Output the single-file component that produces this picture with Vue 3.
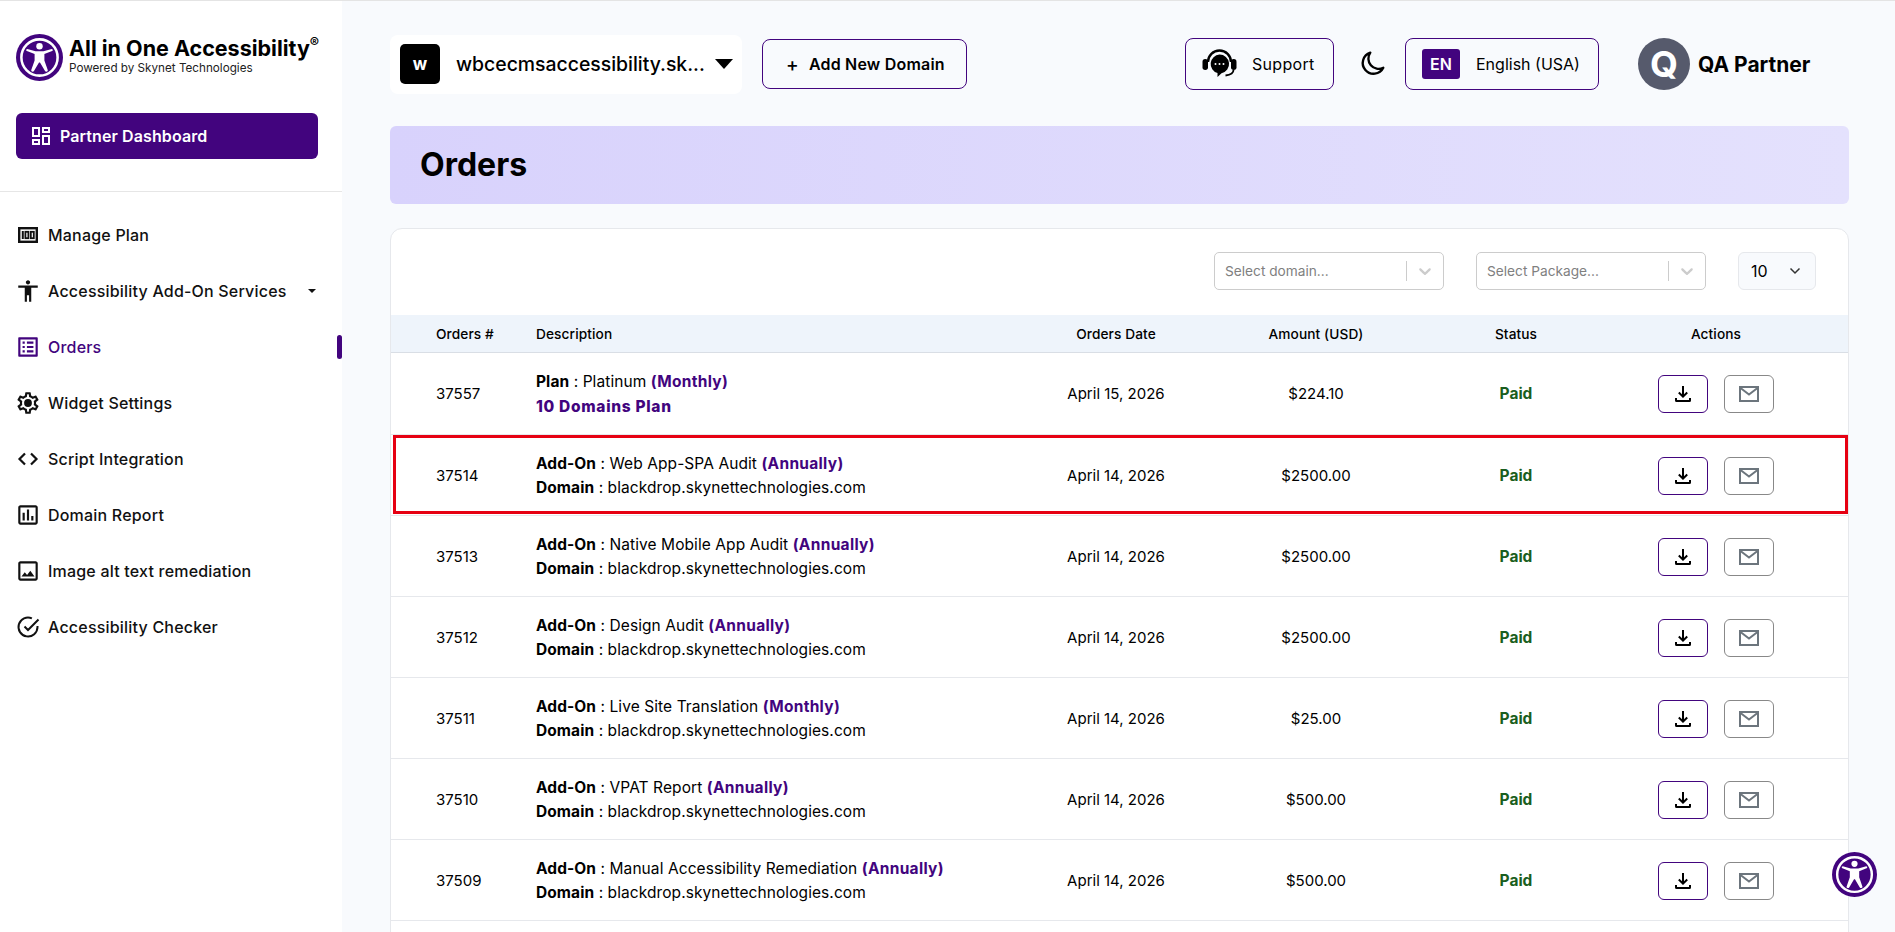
<script setup>
const navItems = [
  { label: 'Manage Plan', icon: 'plan' },
  { label: 'Accessibility Add-On Services', icon: 'person', caret: true },
  { label: 'Orders', icon: 'list', active: true },
  { label: 'Widget Settings', icon: 'gear' },
  { label: 'Script Integration', icon: 'code' },
  { label: 'Domain Report', icon: 'report' },
  { label: 'Image alt text remediation', icon: 'image' },
  { label: 'Accessibility Checker', icon: 'check' }
]

const orders = [
  { id: '37557', kind: 'Plan', name: 'Platinum', period: 'Monthly', extra: '10 Domains Plan', date: 'April 15, 2026', amount: '$224.10' },
  { id: '37514', kind: 'Add-On', name: 'Web App-SPA Audit', period: 'Annually', date: 'April 14, 2026', amount: '$2500.00', marked: true },
  { id: '37513', kind: 'Add-On', name: 'Native Mobile App Audit', period: 'Annually', date: 'April 14, 2026', amount: '$2500.00' },
  { id: '37512', kind: 'Add-On', name: 'Design Audit', period: 'Annually', date: 'April 14, 2026', amount: '$2500.00' },
  { id: '37511', kind: 'Add-On', name: 'Live Site Translation', period: 'Monthly', date: 'April 14, 2026', amount: '$25.00' },
  { id: '37510', kind: 'Add-On', name: 'VPAT Report', period: 'Annually', date: 'April 14, 2026', amount: '$500.00' },
  { id: '37509', kind: 'Add-On', name: 'Manual Accessibility Remediation', period: 'Annually', date: 'April 14, 2026', amount: '$500.00' }
]
</script>

<template>
  <div class="page">
    <aside class="sidebar">
      <div class="brand">
        <svg class="brand-mark" viewBox="0 0 48 48">
          <circle cx="24" cy="24" r="24" fill="#42047e" />
          <circle cx="24" cy="24" r="18.5" fill="none" stroke="#fff" stroke-width="2.6" />
          <circle cx="24" cy="12.6" r="3.3" fill="#fff" />
          <path fill="#fff" d="M10.5 17Q10 15.5 11.5 15.2L20 17.5H28L36.5 15.2Q38 15.5 37.5 17L29 20.5V27L32.5 37Q32.5 38.5 31 38.5Q30 38.5 29.5 37.5L24.5 29H23.5L18.5 37.5Q18 38.5 17 38.5Q15.5 38.5 15.5 37L19 27V20.5Z" />
        </svg>
        <div class="brand-text">
          <div class="brand-name">All in One Accessibility<sup>®</sup></div>
          <div class="brand-sub">Powered by Skynet Technologies</div>
        </div>
      </div>
      <button class="dash-btn">
        <svg viewBox="0 0 24 24" width="24" height="24" fill="#fff"><path d="M19 5v2h-4V5h4M9 5v6H5V5h4m10 8v6h-4v-6h4M9 17v2H5v-2h4M21 3h-8v6h8V3zM11 3H3v10h8V3zm10 8h-8v10h8V11zm-10 4H3v6h8v-6z" /></svg>
        Partner Dashboard
      </button>
      <nav class="nav">
        <a v-for="item in navItems" :key="item.label" class="nav-item" :class="{ active: item.active }">
          <svg v-if="item.icon === 'plan'" class="nav-icon" viewBox="-3 -3 26 26" fill="none" stroke="currentColor">
            <rect x="1.2" y="3.2" width="17.6" height="13.6" stroke-width="2.4" />
            <path d="M4.8 6v8" stroke-width="2" />
            <rect x="7.4" y="6.8" width="3" height="6.4" stroke-width="1.8" />
            <rect x="12.8" y="6.8" width="3" height="6.4" stroke-width="1.8" />
          </svg>
          <svg v-else-if="item.icon === 'person'" class="nav-icon" viewBox="0 0 24 24" fill="currentColor"><path d="M12 2c1.1 0 2 .9 2 2s-.9 2-2 2-2-.9-2-2 .9-2 2-2zm9 7h-6v13h-2v-6h-2v6H9V9H3V7h18v2z" /></svg>
          <svg v-else-if="item.icon === 'list'" class="nav-icon" viewBox="0 0 24 24" fill="currentColor"><path d="M11 7h6v2h-6zm0 4h6v2h-6zm0 4h6v2h-6zM7 7h2v2H7zm0 4h2v2H7zm0 4h2v2H7zM20.1 3H3.9c-.5 0-.9.4-.9.9v16.2c0 .4.4.9.9.9h16.2c.4 0 .9-.5.9-.9V3.9c0-.5-.5-.9-.9-.9zM19 19H5V5h14v14z" /></svg>
          <svg v-else-if="item.icon === 'gear'" class="nav-icon" viewBox="0 0 24 24" fill="currentColor">
            <path d="M19.43 12.98c.04-.32.07-.64.07-.98 0-.34-.03-.66-.07-.98l2.11-1.65c.19-.15.24-.42.12-.64l-2-3.46c-.09-.16-.26-.25-.44-.25-.06 0-.12.01-.17.03l-2.49 1c-.52-.4-1.08-.73-1.69-.98l-.38-2.65C14.46 2.18 14.25 2 14 2h-4c-.25 0-.46.18-.49.42l-.38 2.65c-.61.25-1.17.59-1.69.98l-2.49-1c-.06-.02-.12-.03-.18-.03-.17 0-.34.09-.43.25l-2 3.46c-.13.22-.07.49.12.64l2.11 1.65c-.04.32-.07.65-.07.98 0 .33.03.66.07.98l-2.11 1.65c-.19.15-.24.42-.12.64l2 3.46c.09.16.26.25.44.25.06 0 .12-.01.17-.03l2.49-1c.52.4 1.08.73 1.69.98l.38 2.65c.03.24.24.42.49.42h4c.25 0 .46-.18.49-.42l.38-2.65c.61-.25 1.17-.59 1.69-.98l2.49 1c.06.02.12.03.18.03.17 0 .34-.09.43-.25l2-3.46c.12-.22.07-.49-.12-.64l-2.11-1.65zm-1.98-1.71c.04.31.05.52.05.73 0 .21-.02.43-.05.73l-.14 1.13.89.7 1.08.84-.7 1.21-1.27-.51-1.04-.42-.9.68c-.43.32-.84.56-1.25.73l-1.06.43-.16 1.13-.2 1.35h-1.4l-.19-1.35-.16-1.13-1.06-.43c-.43-.18-.83-.41-1.23-.71l-.91-.7-1.06.43-1.27.51-.7-1.21 1.08-.84.89-.7-.14-1.13c-.03-.31-.05-.54-.05-.74s.02-.43.05-.73l.14-1.13-.89-.7-1.08-.84.7-1.21 1.27.51 1.04.42.9-.68c.43-.32.84-.56 1.25-.73l1.06-.43.16-1.13.2-1.35h1.39l.19 1.35.16 1.13 1.06.43c.43.18.83.41 1.23.71l.91.7 1.06-.43 1.27-.51.7 1.21-1.07.85-.89.7.14 1.13z" />
            <circle cx="12" cy="12" r="3.6" />
          </svg>
          <svg v-else-if="item.icon === 'code'" class="nav-icon" viewBox="-3 -3 26 26" fill="none" stroke="currentColor" stroke-width="2.2"><path d="M7 4.500 1.500 10 7 15.500M13 4.500l5.500 5.500-5.500 5.500" /></svg>
          <svg v-else-if="item.icon === 'report'" class="nav-icon" viewBox="0 0 24 24" fill="currentColor"><path d="M19 3H5c-1.1 0-2 .9-2 2v14c0 1.1.9 2 2 2h14c1.1 0 2-.9 2-2V5c0-1.1-.9-2-2-2zm0 16H5V5h14v14zM7 10h2v7H7zm4-3h2v10h-2zm4 6h2v4h-2z" /></svg>
          <svg v-else-if="item.icon === 'image'" class="nav-icon" viewBox="0 0 24 24" fill="currentColor"><path d="M19 5v14H5V5h14m0-2H5c-1.1 0-2 .9-2 2v14c0 1.1.9 2 2 2h14c1.1 0 2-.9 2-2V5c0-1.1-.9-2-2-2zm-4.860 8.860l-3 3.870L9 13.140 6 17h12l-3.860-5.140z" /></svg>
          <svg v-else class="nav-icon" viewBox="-1 -1 26 26" fill="none" stroke="currentColor" stroke-width="2"><path d="M21.500 11v1a9.500 9.500 0 1 1-5.600-8.700" /><path d="M22.500 4.500 12 15l-3.500-3.500" /></svg>
          <span>{{ item.label }}</span>
          <i v-if="item.caret" class="nav-caret"></i>
        </a>
      </nav>
    </aside>

    <main class="main">
      <header class="topbar">
        <div class="domain">
          <span class="domain-badge">w</span>
          <span class="domain-name">wbcecmsaccessibility.sk...</span>
          <i class="domain-caret"></i>
        </div>
        <button class="outline add-btn"><span class="plus">+</span> Add New Domain</button>
        <div class="topbar-right">
          <button class="outline support-btn">
            <svg viewBox="0 0 36 30" width="37" height="30">
              <path d="M6.500 13a11.500 11.500 0 0 1 23 0" fill="none" stroke="#000" stroke-width="2.4" />
              <rect x="1" y="10" width="5.500" height="11" rx="2.700" />
              <rect x="29.500" y="10" width="5.500" height="11" rx="2.700" />
              <path d="M18 5.500a9.500 9.500 0 0 1 2 18.800l-4 3.700v-3.900A9.500 9.500 0 0 1 18 5.500z" />
              <circle cx="14" cy="15" r="1" fill="#fff" />
              <circle cx="18" cy="15" r="1" fill="#fff" />
              <circle cx="22" cy="15" r="1" fill="#fff" />
              <path d="M32 21q0 4.500-8 5.500" fill="none" stroke="#000" stroke-width="1.8" />
            </svg>
            Support
          </button>
          <svg class="moon" viewBox="0 0 24 24" fill="none" stroke="#000" stroke-width="2.2" stroke-linejoin="round"><path d="M21.500 15.500A10 10 0 1 1 9.500 1.500a9.500 9.500 0 0 0 12 14z" /></svg>
          <button class="outline lang-btn"><span class="lang-code">EN</span> English (USA)</button>
          <div class="user">
            <span class="avatar">Q</span>
            <span class="user-name">QA Partner</span>
          </div>
        </div>
      </header>

      <div class="banner"><h1>Orders</h1></div>

      <section class="card">
        <div class="filters">
          <div class="picker">
            <span class="picker-text">Select domain...</span>
            <i class="picker-sep"></i>
            <svg width="20" height="20" viewBox="0 0 20 20" fill="#ccc"><path d="M4.516 7.548c.436-.446 1.043-.481 1.576 0L10 11.295l3.908-3.747c.533-.481 1.141-.446 1.574 0 .436.445.408 1.197 0 1.615-.406.418-4.695 4.502-4.695 4.502a1.095 1.095 0 0 1-1.576 0S4.924 9.581 4.516 9.163c-.409-.418-.436-1.170 0-1.615z" /></svg>
          </div>
          <div class="picker">
            <span class="picker-text">Select Package...</span>
            <i class="picker-sep"></i>
            <svg width="20" height="20" viewBox="0 0 20 20" fill="#ccc"><path d="M4.516 7.548c.436-.446 1.043-.481 1.576 0L10 11.295l3.908-3.747c.533-.481 1.141-.446 1.574 0 .436.445.408 1.197 0 1.615-.406.418-4.695 4.502-4.695 4.502a1.095 1.095 0 0 1-1.576 0S4.924 9.581 4.516 9.163c-.409-.418-.436-1.170 0-1.615z" /></svg>
          </div>
          <div class="per-page">
            <span>10</span>
            <svg width="12" height="8" viewBox="0 0 12 8" fill="none" stroke="#333" stroke-width="1.5"><path d="M1.500 1.500 6 6l4.500-4.500" /></svg>
          </div>
        </div>

        <div class="row head">
          <div>Orders #</div>
          <div>Description</div>
          <div class="center">Orders Date</div>
          <div class="center">Amount (USD)</div>
          <div class="center">Status</div>
          <div class="center">Actions</div>
        </div>

        <div v-for="(order, i) in orders" :key="order.id" class="row body-row" :class="{ marked: order.marked, first: i === 0 }">
          <div>{{ order.id }}</div>
          <div class="desc" :class="{ loose: order.extra }">
            <div><b>{{ order.kind }}</b> : {{ order.name }} <b class="purple">({{ order.period }})</b></div>
            <div v-if="order.extra"><b class="purple extra">{{ order.extra }}</b></div>
            <div v-else><b>Domain</b> : blackdrop.skynettechnologies.com</div>
          </div>
          <div class="center">{{ order.date }}</div>
          <div class="center">{{ order.amount }}</div>
          <div class="center paid">Paid</div>
          <div class="actions">
            <button class="icon-btn download">
              <svg width="18" height="18" viewBox="0 0 18 18" fill="none" stroke="#000" stroke-width="2"><path d="M9 1v10.500M4.800 7.500 9 11.700l4.200-4.200" /><path d="M2 13v2.500a.5.5 0 0 0 .5.5h13a.5.5 0 0 0 .5-.5V13" /></svg>
            </button>
            <button class="icon-btn mail">
              <svg width="20" height="16" viewBox="0 0 20 16" fill="none" stroke="#6c757d" stroke-width="2"><rect x="1" y="1" width="18" height="14" /><path d="m1.500 2 8.500 6.500L18.500 2" /></svg>
            </button>
          </div>
        </div>
      </section>
    </main>

    <button class="a11y-widget" aria-label="Accessibility">
      <svg viewBox="0 0 48 48" width="45" height="45">
        <circle cx="24" cy="24" r="24" fill="#42047e" />
        <circle cx="24" cy="24" r="18.5" fill="none" stroke="#fff" stroke-width="2.6" />
        <circle cx="24" cy="12.6" r="3.3" fill="#fff" />
        <path fill="#fff" d="M10.5 17Q10 15.5 11.5 15.2L20 17.5H28L36.5 15.2Q38 15.5 37.5 17L29 20.5V27L32.5 37Q32.5 38.5 31 38.5Q30 38.5 29.5 37.5L24.5 29H23.5L18.5 37.5Q18 38.5 17 38.5Q15.5 38.5 15.5 37L19 27V20.5Z" />
      </svg>
    </button>
  </div>
</template>

<style scoped>
.page {
  display: flex;
  height: 932px;
  overflow: hidden;
  position: relative;
  border-top: 1px solid #e4e4e4;
  box-sizing: border-box;
  background: #f8fafd;
  color: #000;
  font-family: Inter, "Liberation Sans", sans-serif;
}

.sidebar {
  width: 342px;
  flex-shrink: 0;
  background: #fff;
  position: relative;
}

.brand {
  display: flex;
  align-items: center;
  gap: 6px;
  padding: 33px 0 0 16px;
}

.brand-mark {
  width: 47px;
  height: 47px;
  flex-shrink: 0;
}

.brand-text {
  margin-top: -4px;
}

.brand-name {
  font-size: 21.5px;
  font-weight: 700;
  line-height: 24px;
  margin-bottom: 1px;
  white-space: nowrap;
}

.brand-name sup {
  font-size: 14px;
  line-height: 0;
  font-weight: 600;
}

.brand-sub {
  font-size: 11.7px;
  line-height: 14px;
  color: #222;
}

.dash-btn {
  display: flex;
  align-items: center;
  gap: 7px;
  width: 302px;
  height: 46px;
  margin: 32px 0 0 16px;
  padding: 0 13px;
  border: none;
  border-radius: 6px;
  background: #42047e;
  color: #fff;
  font: 600 16px Inter, "Liberation Sans", sans-serif;
  letter-spacing: 0.1px;
}

.nav {
  margin-top: 32px;
  padding-top: 15px;
  border-top: 1px solid #e6e6e6;
}

.nav-item {
  display: flex;
  align-items: center;
  height: 56px;
  padding-left: 15px;
  font-size: 16px;
  letter-spacing: 0.2px;
  font-weight: 500;
  color: #111;
  position: relative;
}

.nav-icon {
  width: 26px;
  height: 26px;
  margin-right: 7px;
  flex-shrink: 0;
}

.nav-item.active {
  color: #42047e;
}

.nav-item.active::after {
  content: "";
  position: absolute;
  right: 0;
  top: 16px;
  width: 5px;
  height: 24px;
  border-radius: 3px;
  background: #42047e;
}

.nav-caret {
  margin-left: 21px;
  border: 4px solid transparent;
  border-top-color: #111;
  border-bottom: none;
}

.main {
  flex: 1;
  min-width: 0;
  padding: 33px 46px 0 48px;
}

.topbar {
  display: flex;
  align-items: center;
  height: 60px;
}

.domain {
  display: flex;
  align-items: center;
  width: 352px;
  height: 59px;
  padding-left: 10px;
  box-sizing: border-box;
  background: #fff;
  border-radius: 8px;
}

.domain-badge {
  width: 40px;
  height: 40px;
  display: grid;
  place-items: center;
  background: #000;
  color: #fff;
  border-radius: 5px;
  font-size: 17px;
  font-weight: 700;
}

.domain-name {
  margin-left: 16px;
  width: 259px;
  font-size: 19.4px;
  font-weight: 500;
  white-space: nowrap;
}

.domain-caret {
  border: 9px solid transparent;
  border-top: 10px solid #000;
  border-bottom: none;
}

.outline {
  display: flex;
  align-items: center;
  background: transparent;
  border: 1px solid #42047e;
  border-radius: 8px;
  color: #000;
  font-family: inherit;
}

.add-btn {
  height: 50px;
  width: 205px;
  margin-left: 20px;
  padding-left: 23px;
  font-size: 16px;
  letter-spacing: 0.2px;
  font-weight: 600;
  white-space: nowrap;
}

.plus {
  font-size: 19px;
  font-weight: 500;
  margin-right: 10px;
}

.topbar-right {
  display: flex;
  align-items: center;
  margin-left: auto;
}

.support-btn {
  width: 149px;
  height: 52px;
  padding-left: 15px;
  gap: 14px;
  font-size: 16px;
  letter-spacing: 0.3px;
}

.moon {
  width: 26px;
  height: 26px;
  margin: 0 19px 0 26px;
}

.lang-btn {
  width: 194px;
  height: 52px;
  padding-left: 16px;
  gap: 16px;
  font-size: 16px;
  white-space: nowrap;
}

.lang-code {
  width: 38px;
  height: 30px;
  display: grid;
  place-items: center;
  background: #42047e;
  color: #fff;
  border-radius: 3px;
  font-weight: 600;
  font-size: 16px;
}

.user {
  display: flex;
  align-items: center;
  gap: 8px;
  margin-left: 39px;
  width: 211px;
}

.avatar {
  width: 52px;
  height: 52px;
  border-radius: 50%;
  background: #565a6c;
  color: #fff;
  display: grid;
  place-items: center;
  font-size: 36px;
  font-weight: 700;
}

.user-name {
  font-size: 21px;
  font-weight: 700;
  white-space: nowrap;
}

.banner {
  margin-top: 32px;
  height: 78px;
  display: flex;
  align-items: center;
  padding: 0 0 2px 30px;
  box-sizing: border-box;
  border-radius: 6px;
  background: linear-gradient(90deg, #d8d2fc, #e4e1fd);
}

.banner h1 {
  margin: 0;
  font-size: 32px;
  font-weight: 700;
}

.card {
  margin-top: 24px;
  min-height: 800px;
  background: #fff;
  border: 1px solid #e6e8ec;
  border-radius: 12px 12px 0 0;
  font-size: 15px;
}

.filters {
  display: flex;
  justify-content: flex-end;
  gap: 32px;
  height: 86px;
  padding: 23px 32px 0 0;
  box-sizing: border-box;
}

.picker {
  width: 230px;
  height: 38px;
  display: flex;
  align-items: center;
  padding: 0 8px 0 10px;
  box-sizing: border-box;
  border: 1px solid #ccc;
  border-radius: 5px;
  color: #808080;
  font-size: 13.7px;
}

.picker-text {
  flex: 1;
}

.picker-sep {
  width: 1px;
  height: 20px;
  background: #ccc;
  margin-right: 8px;
}

.per-page {
  width: 78px;
  height: 38px;
  display: flex;
  align-items: center;
  justify-content: space-between;
  padding: 0 14px 0 12px;
  box-sizing: border-box;
  background: #f8fafd;
  border: 1px solid #e6e8ec;
  border-radius: 6px;
  font-size: 16px;
}

.row {
  display: grid;
  grid-template-columns: 100px 480px 200px 200px 200px 200px;
  align-items: center;
  padding-left: 45px;
  box-sizing: border-box;
}

.row.head {
  height: 38px;
  background: #eef4fb;
  border-bottom: 1px solid #d9dee5;
  font-size: 13.7px;
  letter-spacing: 0.1px;
  font-weight: 500;
}

.body-row {
  height: 81px;
  border-bottom: 1px solid #e6e8ec;
  position: relative;
}

.body-row.first {
  height: 82px;
}

.body-row.marked::after {
  content: "";
  position: absolute;
  left: 2px;
  right: 0;
  top: 0;
  bottom: 1px;
  border: 3px solid #e60012;
  pointer-events: none;
}

.desc {
  padding-top: 2px;
  font-size: 15.5px;
  letter-spacing: 0.08px;
  line-height: 24px;
}

.desc.loose {
  padding-top: 0;
  line-height: 25px;
}

.purple {
  color: #42047e;
  letter-spacing: 0.3px;
}

.purple.extra {
  font-weight: 800;
  letter-spacing: 0.7px;
}

.desc b {
  font-weight: 700;
}

.center {
  text-align: center;
}

.paid {
  color: #1a5e20;
  font-weight: 700;
  font-size: 15.5px;
}

.actions {
  display: flex;
  justify-content: center;
  gap: 16px;
  padding-top: 2px;
}

.first .actions {
  padding-top: 0;
}

.icon-btn {
  width: 50px;
  height: 38px;
  display: grid;
  place-items: center;
  background: #fff;
  border-radius: 6px;
  padding: 0;
}

.icon-btn.download {
  border: 1px solid #42047e;
}

.icon-btn.mail {
  border: 1px solid #888;
}

.a11y-widget {
  position: absolute;
  left: 1832px;
  top: 851px;
  width: 45px;
  height: 45px;
  padding: 0;
  border: none;
  background: none;
  display: block;
}

.a11y-widget svg {
  display: block;
}
</style>

<style>
html,
body {
  margin: 0;
}
</style>
